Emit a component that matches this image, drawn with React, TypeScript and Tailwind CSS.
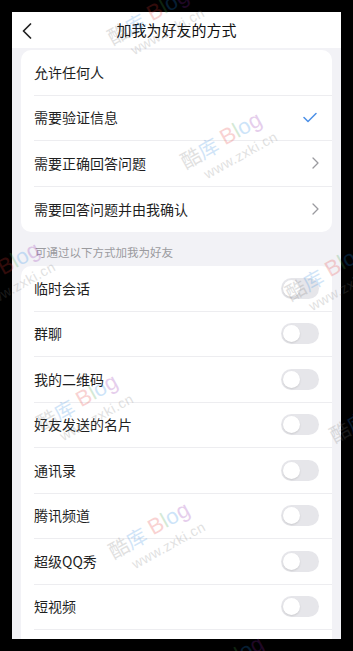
const cardRow = "flex h-[45.5px] items-center justify-between pr-[13px]";

const topOptions = [
  { label: "允许任何人", trail: "none" },
  { label: "需要验证信息", trail: "check" },
  { label: "需要正确回答问题", trail: "chevron" },
  { label: "需要回答问题并由我确认", trail: "chevron" },
];

const ways = [
  "临时会话",
  "群聊",
  "我的二维码",
  "好友发送的名片",
  "通讯录",
  "腾讯频道",
  "超级QQ秀",
  "短视频",
];

// watermark anchors: top-left of the first glyph, page pixels
const marks = [
  "left-[103px] top-[28px]",
  "left-[176px] top-[152px]",
  "left-[-46px] top-[282px]",
  "left-[281px] top-[284px]",
  "left-[32px] top-[414px]",
  "left-[325px] top-[426px]",
  "left-[104px] top-[542px]",
  "left-[178px] top-[676px]",
];

function Check() {
  return (
    <svg width="14" height="11" viewBox="0 0 14 11" fill="none" className="mr-[2px]">
      <path d="M1 5.5 L5 9.5 L13 1.5" stroke="#4a8fe7" strokeWidth="1.5" strokeLinecap="round" strokeLinejoin="round" />
    </svg>
  );
}

function Chevron() {
  return (
    <svg width="7" height="12" viewBox="0 0 7 12" fill="none">
      <path d="M1 1 L6 6 L1 11" stroke="#9a9a9f" strokeWidth="1.3" strokeLinecap="round" strokeLinejoin="round" />
    </svg>
  );
}

function Toggle() {
  return (
    <div className="flex h-[21px] w-[38px] items-center rounded-full bg-[#e6e6ea] px-[2px]">
      <div className="h-[17px] w-[17px] rounded-full bg-white shadow-[0_1px_2px_rgba(0,0,0,0.12)]" />
    </div>
  );
}

function Watermark({ className }: { className: string }) {
  return (
    <div className={`absolute origin-top-left -rotate-[29deg] whitespace-nowrap leading-none opacity-[0.22] ${className}`}>
      <div className="flex items-end text-[20px]">
        <span className="text-[#777]">酷</span>
        <span className="text-[#2f8ae0]">库</span>
        <span className="ml-[6px] font-['Liberation_Sans',sans-serif] text-[22px] font-light">
          <span className="text-[#e53935]">B</span>
          <span className="text-[#43a047]">l</span>
          <span className="text-[#1e88e5]">o</span>
          <span className="text-[#8e24aa]">g</span>
        </span>
      </div>
      <div className="ml-[14px] mt-[5px] font-['Liberation_Sans',sans-serif] text-[14px] tracking-[0.5px] text-[#777]">
        www.zxki.cn
      </div>
    </div>
  );
}

export default function App() {
  return (
    <div className="relative h-[651px] w-[353px] overflow-hidden bg-black p-[12px] font-['Noto_Sans_CJK_SC','Noto_Sans',sans-serif]">
      <div className="flex h-[627px] w-[329px] flex-col overflow-hidden bg-[#f2f2f6]">
        <header className="relative flex h-[36px] shrink-0 items-center justify-center bg-white">
          <svg width="10" height="16" viewBox="0 0 10 16" fill="none" className="absolute left-[10px] top-[11px]">
            <path d="M8.5 1 L1.5 8 L8.5 15" stroke="#222" strokeWidth="1.7" strokeLinecap="round" strokeLinejoin="round" />
          </svg>
          <h1 className="text-[15px] font-normal text-[#111]">加我为好友的方式</h1>
        </header>

        <div className="px-[9px] pt-[2px]">
          <div className="rounded-[10px] bg-white pl-[13px]">
            {topOptions.map((o, i) => (
              <div
                key={o.label}
                className={`${cardRow} ${i < topOptions.length - 1 ? "border-b border-[#ededf0]" : ""}`}
              >
                <span className="text-[14px] text-[#1f1f1f]">{o.label}</span>
                {o.trail === "check" && <Check />}
                {o.trail === "chevron" && <Chevron />}
              </div>
            ))}
          </div>

          <p className="px-[14px] pb-[6px] pt-[12px] text-[11.5px] leading-[16px] text-[#9b9b9f]">
            可通过以下方式加我为好友
          </p>

          <div className="rounded-[10px] bg-white pl-[13px]">
            {ways.map((w) => (
              <div key={w} className={`${cardRow} border-b border-[#ededf0]`}>
                <span className="text-[14px] text-[#1f1f1f]">{w}</span>
                <Toggle />
              </div>
            ))}
            <div className="h-[45.5px]" />
          </div>
        </div>
      </div>

      <div className="pointer-events-none absolute inset-0 select-none">
        {marks.map((m) => (
          <Watermark key={m} className={m} />
        ))}
      </div>
    </div>
  );
}
